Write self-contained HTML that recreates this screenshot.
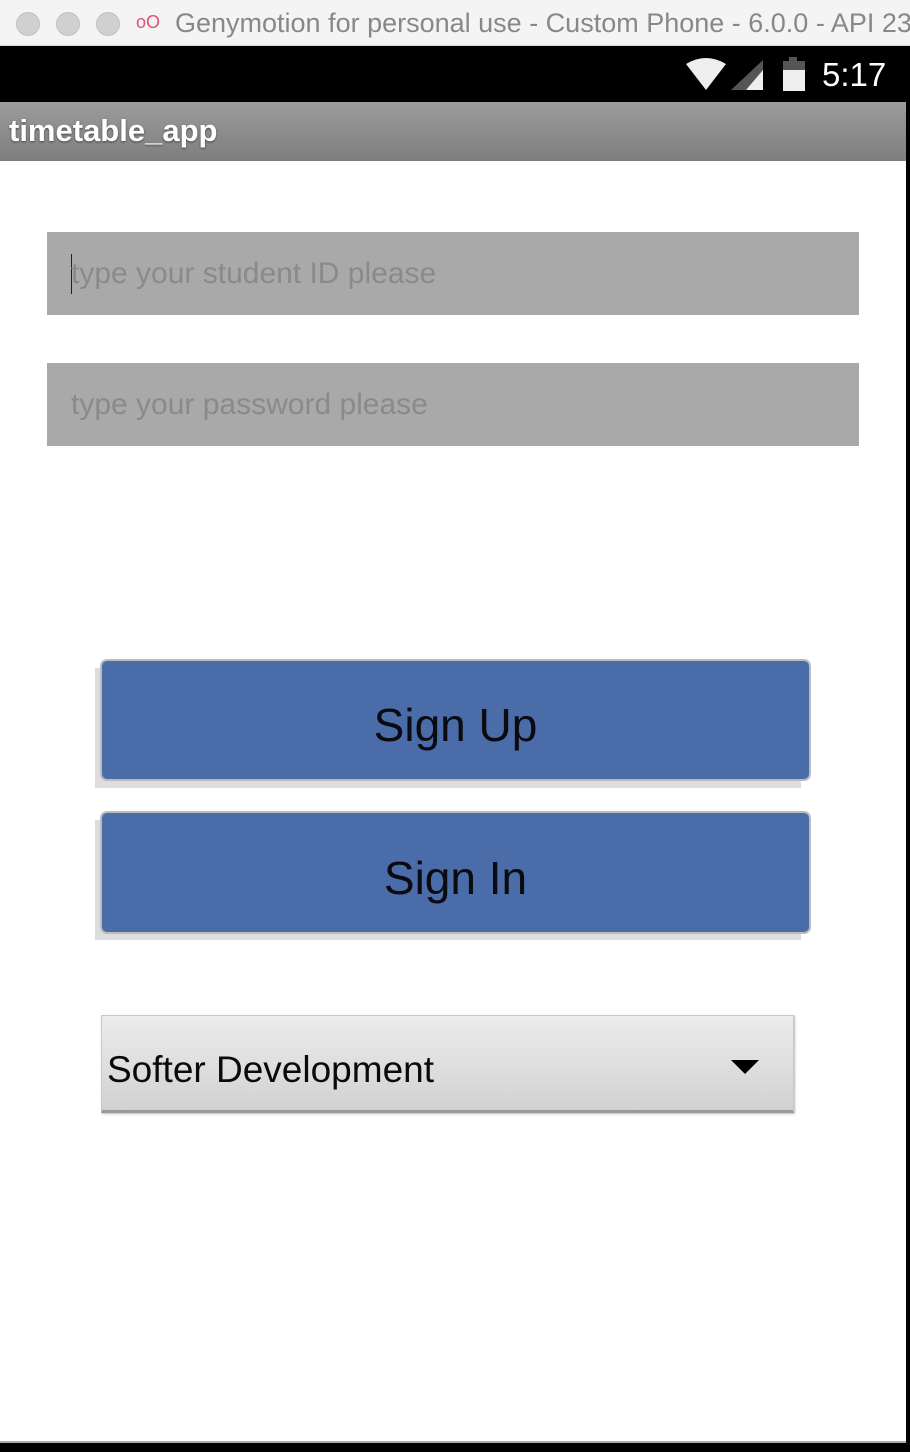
<!DOCTYPE html>
<html><head><style>
*{margin:0;padding:0;box-sizing:border-box}
body{width:910px;height:1452px;background:#000;position:relative;overflow:hidden;font-family:"Liberation Sans",sans-serif}
.abs{position:absolute}
.cx{display:inline-block;white-space:nowrap}
</style></head><body>
<div class="abs" style="left:0;top:0;width:910px;height:46px;background:#f4f4f4;border-bottom:1px solid #d8d8d8"></div>
<div class="abs" style="left:16px;top:12px;width:24px;height:24px;border-radius:50%;background:#d0d0d0;border:1px solid #c0c0c0"></div>
<div class="abs" style="left:56px;top:12px;width:24px;height:24px;border-radius:50%;background:#d0d0d0;border:1px solid #c0c0c0"></div>
<div class="abs" style="left:96px;top:12px;width:24px;height:24px;border-radius:50%;background:#d0d0d0;border:1px solid #c0c0c0"></div>
<div class="abs" style="left:136px;top:12px;font-size:18px;color:#e0507a">oO</div>
<div class="abs" style="left:175px;top:8px;font-size:27px;color:#888;white-space:nowrap">Genymotion for personal use - Custom Phone - 6.0.0 - API 23</div>
<div class="abs" style="left:0;top:46px;width:910px;height:56px;background:#000"></div>
<svg class="abs" style="left:684px;top:58px" width="84" height="34" viewBox="0 0 84 34">
<path d="M2 6 Q22 -6 42 6 L22 32 Z" fill="#eee"/>
<path d="M79 2 L79 32 L47 32 Z" fill="#555"/>
<path d="M79 12 L79 32 L62 32 Z" fill="#eee"/>
</svg>
<div class="abs" style="left:789px;top:57px;width:8px;height:5px;background:#555"></div>
<div class="abs" style="left:783px;top:61px;width:22px;height:30px;background:#555"></div>
<div class="abs" style="left:783px;top:70px;width:22px;height:21px;background:#eee"></div>
<div class="abs" style="left:822px;top:56px;font-size:33px;color:#fff">5:17</div>
<div class="abs" style="left:0;top:102px;width:906px;height:1341px;background:#fff"></div>
<div class="abs" style="left:0;top:102px;width:906px;height:59px;background:linear-gradient(#9c9c9c,#7e7e7e)"></div>
<div class="abs" style="left:9px;top:113px;font-size:31px;font-weight:bold;color:#fff;text-shadow:0 1px 2px #444;white-space:nowrap">timetable_app</div>
<div class="abs" style="left:47px;top:232px;width:812px;height:83px;background:#a9a9a9"></div>
<div class="abs" style="left:71px;top:254px;width:1px;height:40px;background:#222"></div>
<div class="abs" style="left:71px;top:257px;font-size:30px;color:#8a8a8a;white-space:nowrap">type your student ID please</div>
<div class="abs" style="left:47px;top:363px;width:812px;height:83px;background:#a9a9a9"></div>
<div class="abs" style="left:71px;top:388px;font-size:30px;color:#8a8a8a;white-space:nowrap">type your password please</div>
<div class="abs" style="left:95px;top:668px;width:706px;height:120px;background:#ddd"></div>
<div class="abs" style="left:100px;top:659px;width:711px;height:122px;background:#4a6ca8;border:2px solid #bcbcbc;border-radius:7px;text-align:center;font-size:46px;line-height:128px;color:#0a0a10">Sign Up</div>
<div class="abs" style="left:95px;top:820px;width:706px;height:120px;background:#ddd"></div>
<div class="abs" style="left:100px;top:811px;width:711px;height:123px;background:#4a6ca8;border:2px solid #bcbcbc;border-radius:7px;text-align:center;font-size:46px;line-height:130px;color:#0a0a10">Sign In</div>
<div class="abs" style="left:101px;top:1015px;width:693px;height:98px;background:linear-gradient(#ececec,#d2d2d2);border:1px solid #c8c8c8;border-bottom:3px solid #9a9a9a;box-shadow:1px 1px 2px #bbb"></div>
<div class="abs" style="left:107px;top:1049px;font-size:37px;color:#0a0a0a;white-space:nowrap">Softer Development</div>
<div class="abs" style="left:731px;top:1060px;width:0;height:0;border-left:14px solid transparent;border-right:14px solid transparent;border-top:14px solid #000"></div>
<div class="abs" style="left:0;top:1441px;width:906px;height:2px;background:#aaa"></div>
</body></html>
